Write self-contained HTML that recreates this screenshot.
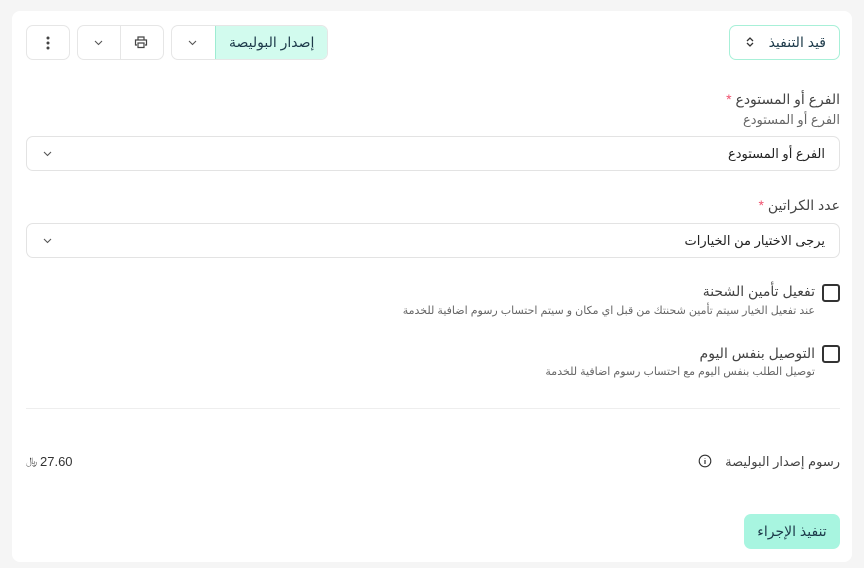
<!DOCTYPE html>
<html dir="rtl"><head><meta charset="utf-8"><style>
*{box-sizing:border-box;margin:0;padding:0}
body{width:864px;height:568px;background:#f5f5f5;font-family:"Liberation Sans","DejaVu Sans",sans-serif;color:#333;position:relative;overflow:hidden}
.card{position:absolute;left:12px;top:11px;width:840px;height:551px;background:#fff;border-radius:8px}
.a{position:absolute}
.btn{position:absolute;border:1px solid #e6e6e6;border-radius:7px;background:#fff}
.t{position:absolute;white-space:nowrap;font-size:13px}
.sel{position:absolute;left:26px;width:814px;height:35px;border:1px solid #e3e3e3;border-radius:7px}
.chk{position:absolute;left:822px;width:18px;height:18px;border:2px solid #333;border-radius:3px}
</style></head><body>
<div class="card"></div>
<div class="btn" style="left:729px;top:25px;width:111px;height:35px;border-color:#a8f0d8"></div>
<div class="t" style="right:38px;top:34px;font-size:14px;color:#1d3a4a">قيد التنفيذ</div>
<svg class="a" style="left:745px;top:36px" width="10" height="12" viewBox="0 0 10 12"><path d="M2 5l3-3 3 3M2 7l3 3 3-3" fill="none" stroke="#333" stroke-width="1.3"/></svg>
<div class="btn" style="left:26px;top:25px;width:44px;height:35px"></div>
<svg class="a" style="left:46px;top:35px" width="4" height="16"><circle cx="2" cy="3" r="1.5" fill="#444"/><circle cx="2" cy="8" r="1.5" fill="#444"/><circle cx="2" cy="13" r="1.5" fill="#444"/></svg>
<div class="btn" style="left:77px;top:25px;width:87px;height:35px"></div>
<div class="a" style="left:120px;top:26px;width:1px;height:33px;background:#e6e6e6"></div>
<svg class="a" style="left:94px;top:40px" width="9" height="6"><path d="M1 1l3.5 3.5 3.5-3.5" fill="none" stroke="#555" stroke-width="1.1"/></svg>
<svg class="a" style="left:134px;top:35px" width="14" height="14" viewBox="0 0 14 14"><path d="M4 5V2h6v3M3 10H1.5V5h11v5H11M4 8h6v4.5H4z" fill="none" stroke="#444" stroke-width="1.2"/></svg>
<div class="btn" style="left:171px;top:25px;width:157px;height:35px;overflow:hidden"><div class="a" style="left:43px;top:0;width:113px;height:33px;background:#d2fbee;border-left:1px solid #9eecd2"></div></div>
<svg class="a" style="left:188px;top:40px" width="9" height="6"><path d="M1 1l3.5 3.5 3.5-3.5" fill="none" stroke="#555" stroke-width="1.1"/></svg>
<div class="t" style="left:229px;top:34px;font-size:14px;color:#1d3a4a">إصدار البوليصة</div>
<div class="t" style="right:24px;top:91px;font-size:14px;color:#444">الفرع أو المستودع <span style="color:#f0506e">*</span></div>
<div class="t" style="right:24px;top:112px;color:#666">الفرع أو المستودع</div>
<div class="sel" style="top:136px"></div>
<div class="t" style="right:39px;top:146px;color:#222">الفرع أو المستودع</div>
<svg class="a" style="left:43px;top:151px" width="9" height="6"><path d="M1 1l3.5 3.5 3.5-3.5" fill="none" stroke="#555" stroke-width="1.1"/></svg>
<div class="t" style="right:24px;top:197px;font-size:14px;color:#444">عدد الكراتين <span style="color:#f0506e">*</span></div>
<div class="sel" style="top:223px"></div>
<div class="t" style="right:39px;top:233px;color:#222">يرجى الاختيار من الخيارات</div>
<svg class="a" style="left:43px;top:238px" width="9" height="6"><path d="M1 1l3.5 3.5 3.5-3.5" fill="none" stroke="#555" stroke-width="1.1"/></svg>
<div class="chk" style="top:284px"></div>
<div class="t" style="right:49px;top:283px;font-size:14px;color:#444">تفعيل تأمين الشحنة</div>
<div class="t" style="right:49px;top:304px;font-size:11px;color:#666">عند تفعيل الخيار سيتم تأمين شحنتك من قبل اي مكان و سيتم احتساب رسوم اضافية للخدمة</div>
<div class="chk" style="top:345px"></div>
<div class="t" style="right:49px;top:345px;font-size:14px;color:#444">التوصيل بنفس اليوم</div>
<div class="t" style="right:49px;top:365px;font-size:11px;color:#666">توصيل الطلب بنفس اليوم مع احتساب رسوم اضافية للخدمة</div>
<div class="a" style="left:26px;top:408px;width:814px;height:1px;background:#eee"></div>
<div class="t" style="right:24px;top:454px;color:#444">رسوم إصدار البوليصة</div>
<svg class="a" style="left:698px;top:454px" width="14" height="14"><circle cx="7" cy="7" r="5.8" fill="none" stroke="#333" stroke-width="1.1"/><path d="M7 6v4M7 4v.5" stroke="#333" stroke-width="1.2"/></svg>
<div class="t" style="left:40px;top:454px;color:#333" dir="ltr">27.60</div>
<div class="t" style="left:26px;top:456px;color:#333;font-size:10px" dir="ltr">﷼</div>
<div class="a" style="left:744px;top:514px;width:96px;height:35px;background:#a8f5e0;border-radius:7px"></div>
<div class="t" style="left:744px;width:96px;text-align:center;top:523px;font-size:14px;color:#1d3a4a">تنفيذ الإجراء</div>
</body></html>
